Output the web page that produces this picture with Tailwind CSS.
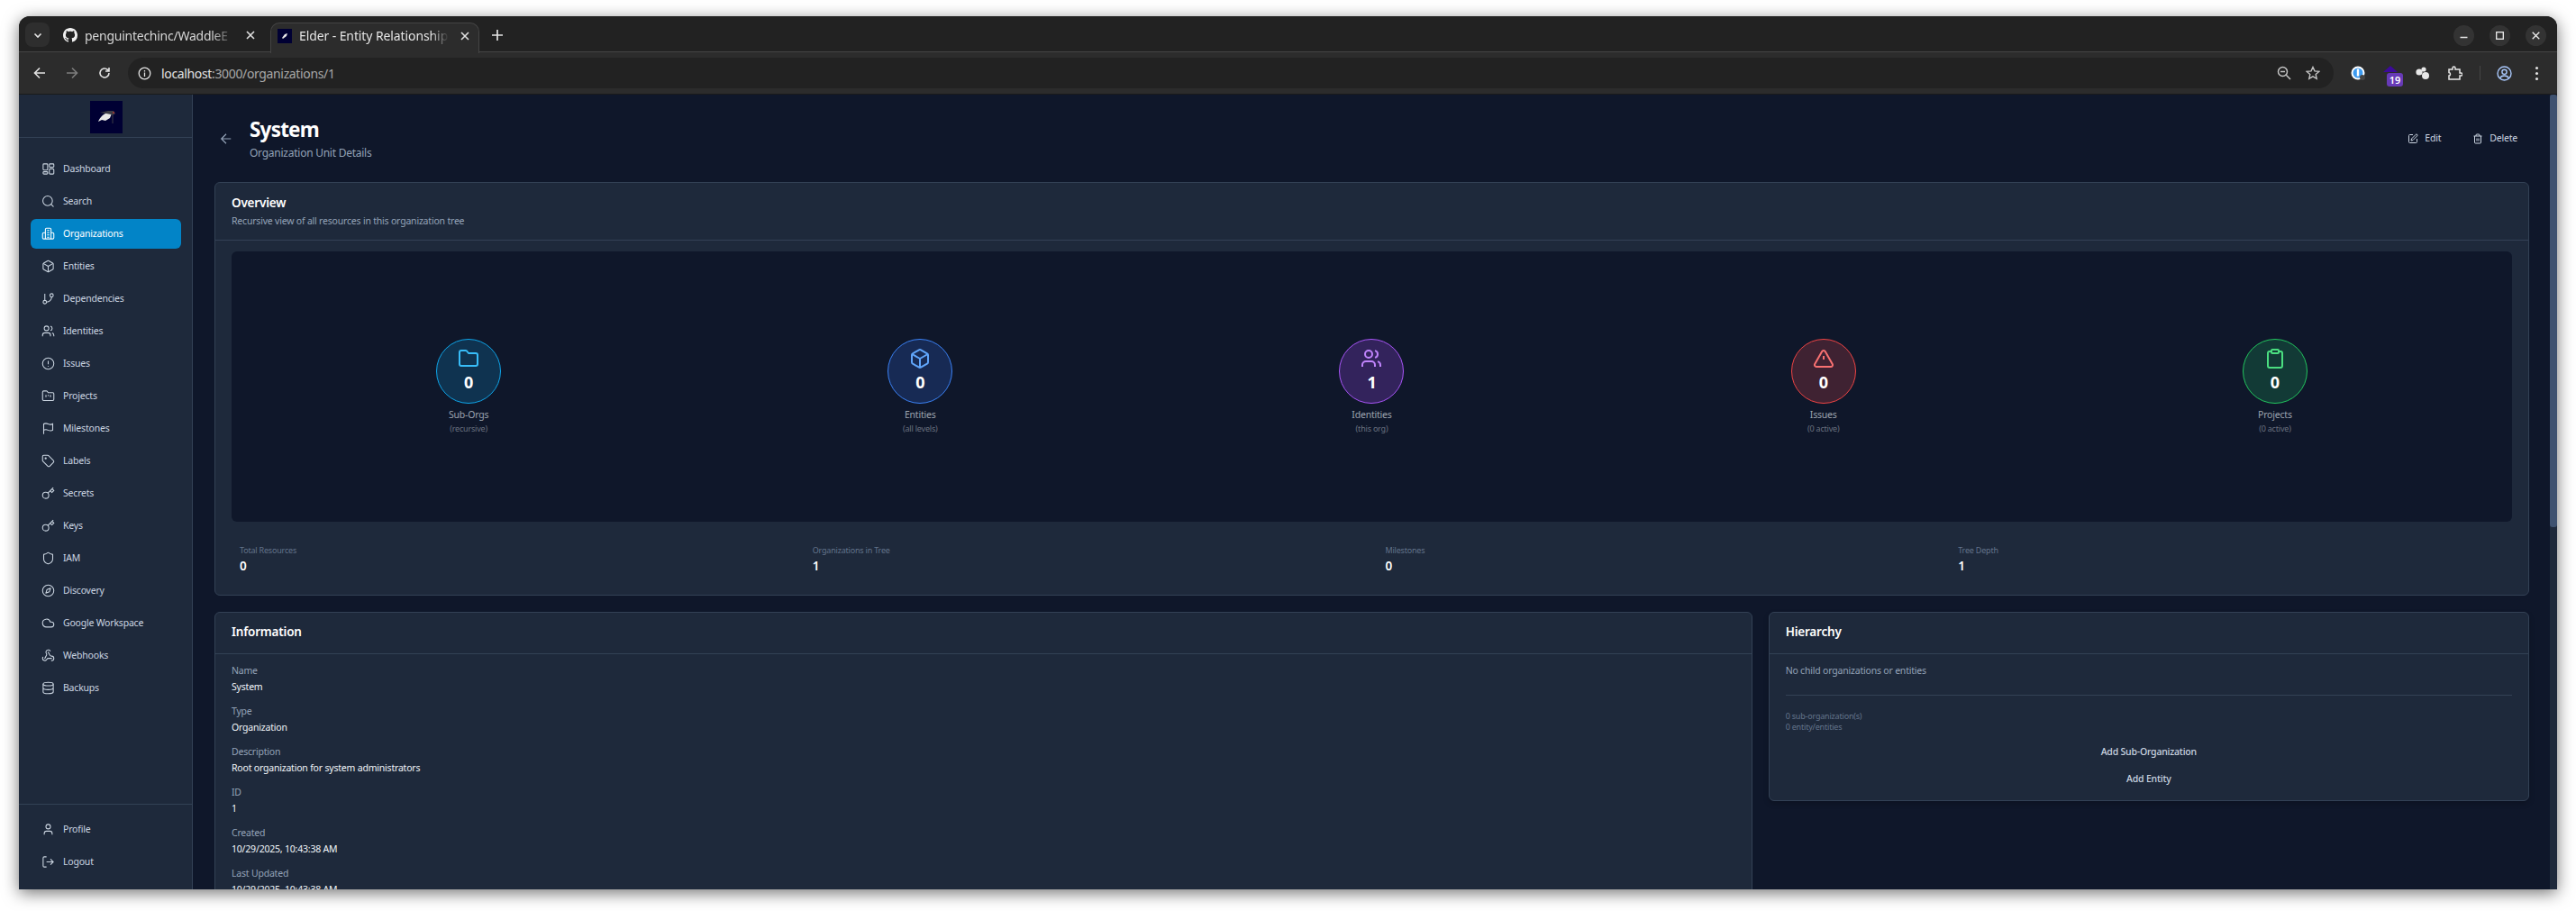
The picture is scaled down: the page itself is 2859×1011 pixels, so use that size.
<!DOCTYPE html>
<html><head><meta charset="utf-8"><script src="https://cdn.jsdelivr.net/npm/@tailwindcss/browser@4"></script></head>
<body class="bg-white m-0 overflow-hidden">
<div class="w-[2859px] h-[1011px] pt-[18px] pl-[21px] overflow-hidden font-['Noto_Sans',sans-serif] tracking-[-0.2px]">
<div class="w-[2817px] h-[969px] rounded-t-[12px] overflow-hidden flex flex-col shadow-[0_4px_18px_rgba(0,0,0,0.55)] bg-[#222222]">
 <!-- tab strip -->
 <div class="h-[40px] shrink-0 relative flex items-start pt-[7px] pl-[7px] bg-[#222222] border-b border-[#444444]">
  <div class="w-[27px] h-[27px] rounded-[8px] bg-[#2e2e2e] flex items-center justify-center"><svg width="10" height="10" viewBox="0 0 10 10" fill="none" stroke="#e3e3e3" stroke-width="1.6"><path d="M1.5 3.5 5 7l3.500-3.500"/></svg></div>
  <div class="w-[252px] h-[33px] pl-[15px] pb-[5px] flex items-center gap-[8px] text-[#d5d5d5] text-[14px] tracking-[-0.25px]">
   <svg width="16" height="16" viewBox="0 0 16 16" fill="#f0f0f0" class="shrink-0"><path d="M8 0C3.580 0 0 3.580 0 8c0 3.540 2.290 6.530 5.470 7.590.4.070.550-.170.550-.380 0-.190-.010-.820-.010-1.490-2.010.370-2.530-.490-2.690-.940-.090-.230-.480-.940-.820-1.130-.280-.150-.680-.520-.010-.530.630-.010 1.080.580 1.230.820.720 1.210 1.870.870 2.330.660.070-.520.280-.870.510-1.070-1.780-.2-3.640-.890-3.640-3.950 0-.870.310-1.590.820-2.150-.080-.2-.360-1.020.080-2.120 0 0 .670-.210 2.200.820.640-.180 1.320-.270 2-.270s1.360.090 2 .270c1.530-1.040 2.200-.820 2.200-.820.440 1.100.160 1.920.080 2.120.510.560.820 1.270.820 2.150 0 3.070-1.870 3.750-3.650 3.950.290.250.540.730.540 1.480 0 1.070-.010 1.930-.010 2.200 0 .210.150.460.550.380A8.010 8.010 0 0 0 16 8c0-4.420-3.580-8-8-8z"/></svg>
   <span class="w-[166px] whitespace-nowrap overflow-hidden [mask-image:linear-gradient(to_right,black_85%,transparent)]">penguintechinc/WaddleE</span>
   <svg width="10" height="10" viewBox="0 0 10 10" stroke="#e0e0e0" stroke-width="1.6" class="ml-[5px] shrink-0"><path d="M1 1l8 8M9 1 1 9"/></svg>
  </div>
  <div class="w-[232px] h-[34px] ml-[-7px] pb-[6px] bg-[#2c2c2c] border border-b-0 border-[#444444] rounded-t-[10px] pl-[7px] flex items-center gap-[8px] text-[#e3e3e3] text-[14px] tracking-[-0.1px] relative z-10">
   <div class="w-[16px] h-[16px] bg-[#000033] shrink-0 flex items-center justify-center"><svg width="10" height="10" viewBox="0 0 10 10"><path d="M2 7 5 3l3-1-1 3-4 3z" fill="#e8e8e8"/></svg></div>
   <span class="w-[166px] whitespace-nowrap overflow-hidden [mask-image:linear-gradient(to_right,black_88%,transparent)]">Elder - Entity Relationship</span>
   <svg width="10" height="10" viewBox="0 0 10 10" stroke="#e0e0e0" stroke-width="1.6" class="ml-[5px] shrink-0"><path d="M1 1l8 8M9 1 1 9"/></svg>
  </div>
  <svg width="12" height="12" viewBox="0 0 12 12" stroke="#e3e3e3" stroke-width="1.7" class="ml-[14px] mt-[8px]"><path d="M6 0v12M0 6h12"/></svg>
  <div class="ml-auto mr-[12px] mt-[3px] flex gap-[17px]">
   <div class="w-[23px] h-[23px] rounded-full bg-[#333333] flex items-center justify-center"><svg width="9" height="9" viewBox="0 0 9 9" stroke="#e8e8e8" stroke-width="1.3"><path d="M0.500 6.500h8"/></svg></div>
   <div class="w-[23px] h-[23px] rounded-full bg-[#333333] flex items-center justify-center"><svg width="9" height="9" viewBox="0 0 9 9" fill="none" stroke="#eeeeee" stroke-width="1.3"><rect x=".7" y=".7" width="7.6" height="7.6"/></svg></div>
   <div class="w-[23px] h-[23px] rounded-full bg-[#333333] flex items-center justify-center"><svg width="9" height="9" viewBox="0 0 9 9" stroke="#eeeeee" stroke-width="1.3"><path d="M.7.7l7.600 7.600M8.300.7.7 8.300"/></svg></div>
  </div>
 </div>
 <!-- toolbar -->
 <div class="h-[47px] shrink-0 bg-[#2c2c2c] flex items-center border-b border-[#1a1a1a] relative">
  <svg width="14" height="14" viewBox="0 0 14 14" fill="none" stroke="#e3e3e3" stroke-width="1.6" class="ml-[16px]"><path d="M13 7H1.500M7 1.500 1.500 7 7 12.500"/></svg>
  <svg width="14" height="14" viewBox="0 0 14 14" fill="none" stroke="#7d7d7d" stroke-width="1.6" class="ml-[22px]"><path d="M1 7h11.500M7 1.500 12.500 7 7 12.500"/></svg>
  <svg width="14" height="14" viewBox="0 0 14 14" fill="none" stroke="#e3e3e3" stroke-width="1.6" class="ml-[22px]"><path d="M12 7a5 5 0 1 1-1.600-3.700L12 5M12 1v4H8"/></svg>
  <div class="ml-[19px] w-[2448px] h-[34px] rounded-full bg-[#222222] flex items-center text-[14px] tracking-[-0.35px]">
   <div class="w-[36px] flex justify-center"><svg width="15" height="15" viewBox="0 0 15 15" fill="none" stroke="#e3e3e3" stroke-width="1.3"><circle cx="7.500" cy="7.500" r="6.300"/><path d="M7.500 6.500V11M7.500 4v1.400"/></svg></div>
   <span class="text-[#e3e3e3] ml-[1px]">localhost<span class="text-[#a8a8a8]">:3000/organizations/1</span></span>
   <div class="ml-auto mr-[15px] flex items-center gap-[16px]">
    <svg width="16" height="16" viewBox="0 0 16 16" fill="none" stroke="#c4c4c4" stroke-width="1.5"><circle cx="6.500" cy="6.500" r="5"/><path d="M10.300 10.300 15 15M4 6.500h5"/></svg>
    <svg width="16" height="16" viewBox="0 0 16 16" fill="none" stroke="#c4c4c4" stroke-width="1.4"><path d="m8 1.500 2 4.400 4.800.5-3.600 3.200 1 4.800L8 11.900l-4.200 2.500 1-4.800L1.200 6.400 6 5.900z"/></svg>
   </div>
  </div>
  <div class="relative w-[36px] h-[36px] ml-[9px] flex items-center justify-center"><svg width="16" height="16" viewBox="0 0 16 16"><circle cx="8" cy="8" r="7.500" fill="#fff"/><circle cx="8" cy="8" r="5.500" fill="#3d9bf0"/><rect x="6.800" y="3.500" width="2.400" height="8" fill="#fff"/><circle cx="13" cy="13" r="3" fill="#444"/></svg></div>
  <div class="relative w-[36px] h-[36px]"><svg width="20" height="10" viewBox="0 0 20 10" class="absolute left-[8px] top-[10px]"><path d="M10 0l8 7H2z" fill="#3c0a9a"/></svg><span class="absolute left-[14px] top-[18px] w-[18px] h-[15px] rounded-[3px] bg-[#673ab7] text-white text-[11px] font-semibold leading-[15px] text-center tracking-normal">19</span></div>
  <div class="w-[36px] h-[36px] flex items-center justify-center"><svg width="18" height="18" viewBox="0 0 18 18" fill="#e8e8e8"><circle cx="5" cy="8" r="3.600"/><circle cx="10" cy="5" r="2.600"/><circle cx="12" cy="12" r="4"/></svg></div>
  <div class="w-[36px] h-[36px] flex items-center justify-center"><svg width="16" height="16" viewBox="0 0 16 16" fill="none" stroke="#e8e8e8" stroke-width="1.5"><path d="M1 4h4V2.500a1.500 1.500 0 0 1 3 0V4h5v4h1.500a1 1 0 0 1 0 3H13v4H1v-4c2 0 2-3.500 0-3.500z"/></svg></div>
  <div class="w-px h-[16px] bg-[#444444] ml-[9px]"></div>
  <div class="w-[36px] h-[36px] ml-[8px] flex items-center justify-center"><svg width="17" height="17" viewBox="0 0 17 17" fill="none" stroke="#a8c7fa" stroke-width="1.4"><circle cx="8.500" cy="8.500" r="7.500"/><circle cx="8.500" cy="6.800" r="2.600"/><path d="M3.500 14c1-2.500 3-3 5-3s4 .5 5 3"/></svg></div>
  <div class="w-[36px] h-[36px] flex flex-col items-center justify-center gap-[3px]"><i class="w-[3px] h-[3px] rounded-full bg-[#e3e3e3]"></i><i class="w-[3px] h-[3px] rounded-full bg-[#e3e3e3]"></i><i class="w-[3px] h-[3px] rounded-full bg-[#e3e3e3]"></i></div>
 </div>
 <!-- page -->
 <div class="flex-1 min-h-0 flex bg-[#0f172a] overflow-hidden">
  <aside class="w-[193px] shrink-0 bg-[#1e293b] border-r border-[#334155] flex flex-col">
   <div class="h-[48px] border-b border-[#334155] flex items-start justify-center pt-[7px]">
    <div class="w-[36px] h-[36px] ml-[2px] bg-[#000033]"><svg width="36" height="36" viewBox="0 0 36 36"><path d="M9 23c2-5 6-9 11-10l4 1-2 5-5 3-4-1z" fill="#e8e8e8"/><path d="M11 13l9-2 6 0 2 3-3 2-2-1-5-1z" fill="#3d3d46"/><path d="M25 16v9" stroke="#3d3d46" stroke-width="1"/><circle cx="26" cy="13" r="1" fill="#a33"/></svg></div>
   </div>
   <nav class="flex-1 pl-[13px] pr-[12px] pt-[18px] text-[10.5px] text-[#cbd5e1] flex flex-col gap-[3px]">
    <a class="h-[33px] px-[12px] flex items-center gap-[9px] rounded-[6px]"><svg class="w-[15px] h-[15px] shrink-0" viewBox="0 0 24 24" fill="none" stroke="currentColor" stroke-width="1.7" stroke-linejoin="round"><rect x="3" y="3" width="8" height="11" rx="1.500"/><rect x="14" y="3" width="8" height="6" rx="1.500"/><rect x="14" y="12" width="8" height="9" rx="1.500"/><rect x="3" y="17" width="8" height="4" rx="1.500"/></svg>Dashboard</a>
    <a class="h-[33px] px-[12px] flex items-center gap-[9px] rounded-[6px]"><svg class="w-[15px] h-[15px] shrink-0" viewBox="0 0 24 24" fill="none" stroke="currentColor" stroke-width="1.700" stroke-linecap="round"><circle cx="11" cy="11" r="8.500"/><path d="m21 21-4-4"/></svg>Search</a>
    <a class="h-[33px] px-[12px] flex items-center gap-[9px] rounded-[6px] bg-[#0284c7] text-white"><svg class="w-[15px] h-[15px] shrink-0" viewBox="0 0 24 24" fill="none" stroke="currentColor" stroke-width="1.700" stroke-linejoin="round"><path d="M7 21V4a2 2 0 0 1 2-2h6a2 2 0 0 1 2 2v17zM7 10H4a2 2 0 0 0-2 2v7a2 2 0 0 0 2 2h3M17 10h3a2 2 0 0 1 2 2v7a2 2 0 0 1-2 2h-3M10 6h4M10 10h4M10 14h4M10 18h4"/></svg>Organizations</a>
    <a class="h-[33px] px-[12px] flex items-center gap-[9px] rounded-[6px]"><svg class="w-[15px] h-[15px] shrink-0" viewBox="0 0 24 24" fill="none" stroke="currentColor" stroke-width="1.700" stroke-linejoin="round"><path d="M21 8a2 2 0 0 0-1-1.700l-7-4a2 2 0 0 0-2 0l-7 4A2 2 0 0 0 3 8v8a2 2 0 0 0 1 1.700l7 4a2 2 0 0 0 2 0l7-4a2 2 0 0 0 1-1.700z"/><path d="m3.300 7 8.700 5 8.700-5M12 22V12"/></svg>Entities</a>
    <a class="h-[33px] px-[12px] flex items-center gap-[9px] rounded-[6px]"><svg class="w-[15px] h-[15px] shrink-0" viewBox="0 0 24 24" fill="none" stroke="currentColor" stroke-width="1.700"><path d="M6 3v12"/><circle cx="18" cy="6" r="3"/><circle cx="6" cy="18" r="3"/><path d="M18 9a9 9 0 0 1-9 9"/></svg>Dependencies</a>
    <a class="h-[33px] px-[12px] flex items-center gap-[9px] rounded-[6px]"><svg class="w-[15px] h-[15px] shrink-0" viewBox="0 0 24 24" fill="none" stroke="currentColor" stroke-width="1.700"><path d="M16 21v-2a4 4 0 0 0-4-4H6a4 4 0 0 0-4 4v2"/><circle cx="9" cy="7" r="4"/><path d="M22 21v-2a4 4 0 0 0-3-3.870M16 3.130a4 4 0 0 1 0 7.750"/></svg>Identities</a>
    <a class="h-[33px] px-[12px] flex items-center gap-[9px] rounded-[6px]"><svg class="w-[15px] h-[15px] shrink-0" viewBox="0 0 24 24" fill="none" stroke="currentColor" stroke-width="1.700"><circle cx="12" cy="12" r="10"/><path d="M12 7v6M12 16v1"/></svg>Issues</a>
    <a class="h-[33px] px-[12px] flex items-center gap-[9px] rounded-[6px]"><svg class="w-[15px] h-[15px] shrink-0" viewBox="0 0 24 24" fill="none" stroke="currentColor" stroke-width="1.700"><path d="M20 20a2 2 0 0 0 2-2V8a2 2 0 0 0-2-2h-8L10 3.500A2 2 0 0 0 8.400 3H4a2 2 0 0 0-2 2v13a2 2 0 0 0 2 2zM8 10v4M12 10v2M16 10v4"/></svg>Projects</a>
    <a class="h-[33px] px-[12px] flex items-center gap-[9px] rounded-[6px]"><svg class="w-[15px] h-[15px] shrink-0" viewBox="0 0 24 24" fill="none" stroke="currentColor" stroke-width="1.700"><path d="M4 22V4s1-1 4-1 5 2 8 2 4-1 4-1v11s-1 1-4 1-5-2-8-2-4 1-4 1"/></svg>Milestones</a>
    <a class="h-[33px] px-[12px] flex items-center gap-[9px] rounded-[6px]"><svg class="w-[15px] h-[15px] shrink-0" viewBox="0 0 24 24" fill="none" stroke="currentColor" stroke-width="1.700" stroke-linejoin="round"><path d="M12.600 2.600A2 2 0 0 0 11.200 2H4a2 2 0 0 0-2 2v7.200a2 2 0 0 0 .6 1.400l8.700 8.700a2.400 2.400 0 0 0 3.400 0l6.600-6.600a2.400 2.400 0 0 0 0-3.400z"/><circle cx="7.500" cy="7.500" r="1"/></svg>Labels</a>
    <a class="h-[33px] px-[12px] flex items-center gap-[9px] rounded-[6px]"><svg class="w-[15px] h-[15px] shrink-0" viewBox="0 0 24 24" fill="none" stroke="currentColor" stroke-width="1.700"><circle cx="7.500" cy="15.500" r="5.500"/><path d="m11.500 11.500 9.500-9.500M15.500 7.500l3 3L22 7l-3-3"/></svg>Secrets</a>
    <a class="h-[33px] px-[12px] flex items-center gap-[9px] rounded-[6px]"><svg class="w-[15px] h-[15px] shrink-0" viewBox="0 0 24 24" fill="none" stroke="currentColor" stroke-width="1.700"><circle cx="7.500" cy="15.500" r="5.500"/><path d="m11.500 11.500 9.500-9.500M15.500 7.500l3 3L22 7l-3-3"/></svg>Keys</a>
    <a class="h-[33px] px-[12px] flex items-center gap-[9px] rounded-[6px]"><svg class="w-[15px] h-[15px] shrink-0" viewBox="0 0 24 24" fill="none" stroke="currentColor" stroke-width="1.700" stroke-linejoin="round"><path d="M20 13c0 5-3.500 7.500-7.700 9a1 1 0 0 1-.7 0C7.500 20.500 4 18 4 13V6a1 1 0 0 1 1-1c2 0 4.500-1.200 6.200-2.700a1.200 1.200 0 0 1 1.600 0C14.500 3.800 17 5 19 5a1 1 0 0 1 1 1z"/></svg>IAM</a>
    <a class="h-[33px] px-[12px] flex items-center gap-[9px] rounded-[6px]"><svg class="w-[15px] h-[15px] shrink-0" viewBox="0 0 24 24" fill="none" stroke="currentColor" stroke-width="1.700" stroke-linejoin="round"><circle cx="12" cy="12" r="10"/><path d="m16.200 7.800-2.100 6.300-6.300 2.100 2.100-6.300z"/></svg>Discovery</a>
    <a class="h-[33px] px-[12px] flex items-center gap-[9px] rounded-[6px]"><svg class="w-[15px] h-[15px] shrink-0" viewBox="0 0 24 24" fill="none" stroke="currentColor" stroke-width="1.700"><path d="M17.500 19H9a7 7 0 1 1 6.700-9h1.800a4.500 4.500 0 1 1 0 9z"/></svg>Google Workspace</a>
    <a class="h-[33px] px-[12px] flex items-center gap-[9px] rounded-[6px]"><svg class="w-[15px] h-[15px] shrink-0" viewBox="0 0 24 24" fill="none" stroke="currentColor" stroke-width="1.700" stroke-linecap="round"><path d="M18 16.980h-5.990c-1.100 0-1.950.940-2.480 1.900A4 4 0 0 1 2 17c.010-.700.200-1.400.570-2"/><path d="m6 17 3.130-5.780c.530-.970.100-2.180-.5-3.100a4 4 0 1 1 6.890-4.060"/><path d="m12 6 3.130 5.730C15.660 12.700 16.900 13 18 13a4 4 0 0 1 0 8"/></svg>Webhooks</a>
    <a class="h-[33px] px-[12px] flex items-center gap-[9px] rounded-[6px]"><svg class="w-[15px] h-[15px] shrink-0" viewBox="0 0 24 24" fill="none" stroke="currentColor" stroke-width="1.700"><ellipse cx="12" cy="5" rx="9" ry="3"/><path d="M3 5v14a9 3 0 0 0 18 0V5M3 12a9 3 0 0 0 18 0"/></svg>Backups</a>
   </nav>
   <div class="border-t border-[#334155] h-[95px] pl-[13px] pr-[12px] pt-[11px] text-[10.5px] text-[#cbd5e1] flex flex-col gap-[3px]">
    <a class="h-[33px] px-[12px] flex items-center gap-[9px]"><svg class="w-[15px] h-[15px] shrink-0" viewBox="0 0 24 24" fill="none" stroke="currentColor" stroke-width="1.700"><path d="M19 21v-2a4 4 0 0 0-4-4H9a4 4 0 0 0-4 4v2"/><circle cx="12" cy="7" r="4"/></svg>Profile</a>
    <a class="h-[33px] px-[12px] flex items-center gap-[9px]"><svg class="w-[15px] h-[15px] shrink-0" viewBox="0 0 24 24" fill="none" stroke="currentColor" stroke-width="1.700"><path d="M9 21H5a2 2 0 0 1-2-2V5a2 2 0 0 1 2-2h4M16 17l5-5-5-5M21 12H9"/></svg>Logout</a>
   </div>
  </aside>
  <main class="flex-1 min-w-0 px-[24px] pt-[24px] overflow-hidden relative">
   <!-- header -->
   <div class="h-[49px] mb-[24px] flex items-center">
    <svg class="w-[18px] h-[18px] text-[#94a3b8] ml-[4px] mt-[1px] shrink-0" viewBox="0 0 24 24" fill="none" stroke="currentColor" stroke-width="1.600"><path d="m12 19-7-7 7-7M19 12H5"/></svg>
    <div class="ml-[17px] mt-[-1px]">
     <h1 class="text-[22.500px] leading-[30px] font-bold text-white tracking-[-0.8px]">System</h1>
     <p class="text-[12px] leading-[15px] mt-[3px] text-[#94a3b8] tracking-[-0.25px]">Organization Unit Details</p>
    </div>
    <div class="ml-auto flex items-center text-[10.500px] text-[#cbd5e1] mr-[20px]">
     <span class="flex items-center gap-[7px]"><svg class="w-[12px] h-[12px]" viewBox="0 0 24 24" fill="none" stroke="currentColor" stroke-width="2"><path d="M12 3H5a2 2 0 0 0-2 2v14a2 2 0 0 0 2 2h14a2 2 0 0 0 2-2v-7"/><path d="M18.400 2.600a2.100 2.100 0 1 1 3 3L12 15l-4 1 1-4z"/></svg>Edit</span>
     <span class="flex items-center gap-[7px] ml-[35px]"><svg class="w-[12px] h-[12px]" viewBox="0 0 24 24" fill="none" stroke="currentColor" stroke-width="2"><path d="M3 6h18M19 6v14a2 2 0 0 1-2 2H7a2 2 0 0 1-2-2V6M8 6V4a2 2 0 0 1 2-2h4a2 2 0 0 1 2 2v2M10 11v6M14 11v6"/></svg>Delete</span>
    </div>
   </div>
   <!-- overview -->
   <section class="bg-[#1e293b] border border-[#334155] rounded-[6px] h-[459px] mr-[7px]">
    <div class="h-[64px] border-b border-[#334155] px-[18px] pt-[12px]">
     <h2 class="text-[13.500px] leading-[20px] font-semibold text-white">Overview</h2>
     <p class="text-[10.500px] leading-[15px] mt-[3px] text-[#94a3b8]">Recursive view of all resources in this organization tree</p>
    </div>
    <div class="px-[18px] pt-[12px]">
     <div class="h-[300px] bg-[#0f172a] rounded-[6px] grid grid-cols-5 px-[12.500px] pt-[97px]">
      <div class="flex flex-col items-center"><div class="w-[72px] h-[72px] rounded-full bg-[#0f3350] border border-[#0ea5e9] flex flex-col items-center pt-[9px]"><svg class="w-[24px] h-[24px] text-[#38bdf8]" viewBox="0 0 24 24" fill="none" stroke="currentColor" stroke-width="2" stroke-linejoin="round"><path d="M20 20a2 2 0 0 0 2-2V8a2 2 0 0 0-2-2h-8L10 3.500A2 2 0 0 0 8.400 3H4a2 2 0 0 0-2 2v13a2 2 0 0 0 2 2z"/></svg><span class="text-[18px] leading-[22px] font-bold text-white mt-[3px]">0</span></div><span class="text-[10.500px] leading-[15px] mt-[5px] text-[#9ca3af]">Sub-Orgs</span><span class="text-[9px] leading-[12px] mt-[2px] text-[#6b7280]">(recursive)</span></div>
      <div class="flex flex-col items-center"><div class="w-[72px] h-[72px] rounded-full bg-[#172a54] border border-[#3b82f6] flex flex-col items-center pt-[9px]"><svg class="w-[24px] h-[24px] text-[#60a5fa]" viewBox="0 0 24 24" fill="none" stroke="currentColor" stroke-width="2" stroke-linejoin="round"><path d="M21 8a2 2 0 0 0-1-1.700l-7-4a2 2 0 0 0-2 0l-7 4A2 2 0 0 0 3 8v8a2 2 0 0 0 1 1.700l7 4a2 2 0 0 0 2 0l7-4a2 2 0 0 0 1-1.700z"/><path d="m3.300 7 8.700 5 8.700-5M12 22V12"/></svg><span class="text-[18px] leading-[22px] font-bold text-white mt-[3px]">0</span></div><span class="text-[10.500px] leading-[15px] mt-[5px] text-[#9ca3af]">Entities</span><span class="text-[9px] leading-[12px] mt-[2px] text-[#6b7280]">(all levels)</span></div>
      <div class="flex flex-col items-center"><div class="w-[72px] h-[72px] rounded-full bg-[#33235c] border border-[#a855f7] flex flex-col items-center pt-[9px]"><svg class="w-[24px] h-[24px] text-[#c084fc]" viewBox="0 0 24 24" fill="none" stroke="currentColor" stroke-width="2"><path d="M16 21v-2a4 4 0 0 0-4-4H6a4 4 0 0 0-4 4v2"/><circle cx="9" cy="7" r="4"/><path d="M22 21v-2a4 4 0 0 0-3-3.870M16 3.130a4 4 0 0 1 0 7.750"/></svg><span class="text-[18px] leading-[22px] font-bold text-white mt-[3px]">1</span></div><span class="text-[10.500px] leading-[15px] mt-[5px] text-[#9ca3af]">Identities</span><span class="text-[9px] leading-[12px] mt-[2px] text-[#6b7280]">(this org)</span></div>
      <div class="flex flex-col items-center"><div class="w-[72px] h-[72px] rounded-full bg-[#3f2232] border border-[#ef4444] flex flex-col items-center pt-[9px]"><svg class="w-[24px] h-[24px] text-[#f87171]" viewBox="0 0 24 24" fill="none" stroke="currentColor" stroke-width="2" stroke-linejoin="round"><path d="m21.700 18-8-14a2 2 0 0 0-3.500 0l-8 14A2 2 0 0 0 4 21h16a2 2 0 0 0 1.700-3zM12 9v4M12 17v.010"/></svg><span class="text-[18px] leading-[22px] font-bold text-white mt-[3px]">0</span></div><span class="text-[10.500px] leading-[15px] mt-[5px] text-[#9ca3af]">Issues</span><span class="text-[9px] leading-[12px] mt-[2px] text-[#6b7280]">(0 active)</span></div>
      <div class="flex flex-col items-center"><div class="w-[72px] h-[72px] rounded-full bg-[#123a36] border border-[#22c55e] flex flex-col items-center pt-[9px]"><svg class="w-[24px] h-[24px] text-[#4ade80]" viewBox="0 0 24 24" fill="none" stroke="currentColor" stroke-width="2" stroke-linejoin="round"><rect x="8" y="2" width="8" height="4" rx="1"/><path d="M16 4h2a2 2 0 0 1 2 2v14a2 2 0 0 1-2 2H6a2 2 0 0 1-2-2V6a2 2 0 0 1 2-2h2"/></svg><span class="text-[18px] leading-[22px] font-bold text-white mt-[3px]">0</span></div><span class="text-[10.500px] leading-[15px] mt-[5px] text-[#9ca3af]">Projects</span><span class="text-[9px] leading-[12px] mt-[2px] text-[#6b7280]">(0 active)</span></div>
     </div>
     <div class="grid grid-cols-4 gap-[12px] mt-[26px] px-0">
      <div class="px-[9px]"><p class="text-[9px] leading-[12px] text-[#64748b]">Total Resources</p><p class="text-[13.500px] leading-[18px] mt-[2px] font-semibold text-white">0</p></div>
      <div class="px-[9px]"><p class="text-[9px] leading-[12px] text-[#64748b]">Organizations in Tree</p><p class="text-[13.500px] leading-[18px] mt-[2px] font-semibold text-white">1</p></div>
      <div class="px-[9px]"><p class="text-[9px] leading-[12px] text-[#64748b]">Milestones</p><p class="text-[13.500px] leading-[18px] mt-[2px] font-semibold text-white">0</p></div>
      <div class="px-[9px]"><p class="text-[9px] leading-[12px] text-[#64748b]">Tree Depth</p><p class="text-[13.500px] leading-[18px] mt-[2px] font-semibold text-white">1</p></div>
     </div>
    </div>
   </section>
   <!-- lower cards -->
   <div class="grid grid-cols-3 gap-[18px] mt-[18px] items-start mr-[7px]">
    <section class="col-span-2 bg-[#1e293b] border border-[#334155] rounded-t-[6px] h-[330px]">
     <div class="h-[46px] border-b border-[#334155] px-[18px] pb-[2px] flex items-center"><h2 class="text-[13.500px] font-semibold text-white">Information</h2></div>
     <dl class="px-[18px] pt-[11px] text-[10.500px] leading-[15px] flex flex-col gap-[12px]">
      <div><dt class="text-[#94a3b8]">Name</dt><dd class="text-[#f1f5f9] mt-[3px]">System</dd></div>
      <div><dt class="text-[#94a3b8]">Type</dt><dd class="text-[#f1f5f9] mt-[3px]">Organization</dd></div>
      <div><dt class="text-[#94a3b8]">Description</dt><dd class="text-[#f1f5f9] mt-[3px]">Root organization for system administrators</dd></div>
      <div><dt class="text-[#94a3b8]">ID</dt><dd class="text-[#f1f5f9] mt-[3px]">1</dd></div>
      <div><dt class="text-[#94a3b8]">Created</dt><dd class="text-[#f1f5f9] mt-[3px]">10/29/2025, 10:43:38 AM</dd></div>
      <div><dt class="text-[#94a3b8]">Last Updated</dt><dd class="text-[#f1f5f9] mt-[3px]">10/29/2025, 10:43:38 AM</dd></div>
     </dl>
    </section>
    <section class="bg-[#1e293b] border border-[#334155] rounded-[6px] h-[210px] shadow-[0_3px_6px_rgba(0,0,0,0.2)]">
     <div class="h-[46px] border-b border-[#334155] px-[18px] pb-[2px] flex items-center"><h2 class="text-[13.500px] font-semibold text-white">Hierarchy</h2></div>
     <div class="px-[18px] pt-[11px]">
      <p class="text-[10.500px] leading-[15px] text-[#94a3b8]">No child organizations or entities</p>
      <div class="border-t border-[#334155] mt-[19px] pt-[17px]">
       <p class="text-[9px] leading-[12px] text-[#64748b]">0 sub-organization(s)</p>
       <p class="text-[9px] leading-[12px] text-[#64748b]">0 entity/entities</p>
      </div>
      <p class="text-[10.500px] leading-[15px] font-medium text-[#cbd5e1] text-center mt-[14px]">Add Sub-Organization</p>
      <p class="text-[10.500px] leading-[15px] font-medium text-[#cbd5e1] text-center mt-[15px]">Add Entity</p>
     </div>
    </section>
   </div>
   <div class="absolute right-0 top-0 bottom-0 w-[8px] bg-[#1e293b]"><div class="w-full h-[480px] rounded-[3px] bg-[#3f5270]"></div></div>
  </main>
 </div>
</div>
</div>
</body></html>
